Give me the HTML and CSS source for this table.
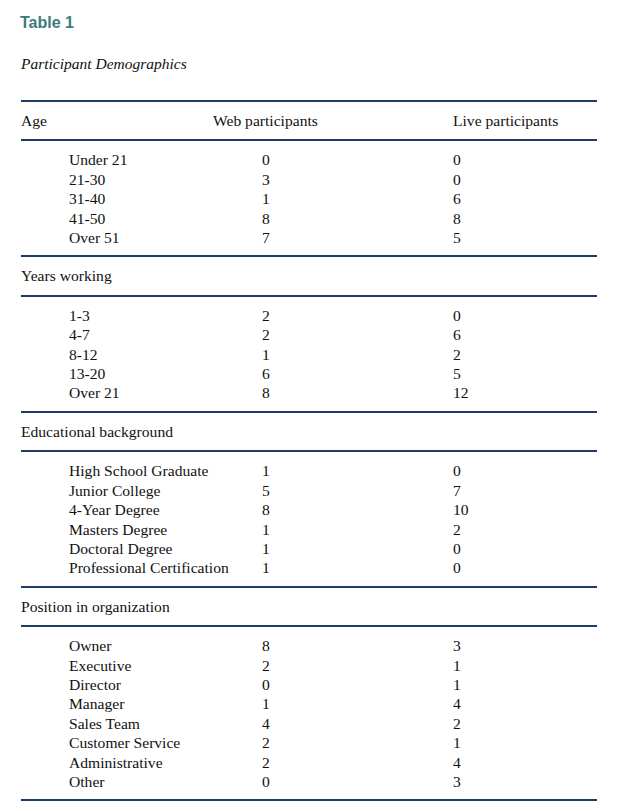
FILE: index.html
```html
<!DOCTYPE html>
<html>
<head>
<meta charset="utf-8">
<link rel="stylesheet" href="styles.css">
</head>
<body>
<div class="page">
  <h1 class="title">Table 1</h1>
  <p class="caption">Participant Demographics</p>
  <div class="table">
    <div class="head">
      <span class="h-label">Age</span>
      <span class="h-web">Web participants</span>
      <span class="h-live">Live participants</span>
    </div>
    <div class="rows">
      <div class="row"><span>Under 21</span><span>0</span><span>0</span></div>
      <div class="row"><span>21-30</span><span>3</span><span>0</span></div>
      <div class="row"><span>31-40</span><span>1</span><span>6</span></div>
      <div class="row"><span>41-50</span><span>8</span><span>8</span></div>
      <div class="row"><span>Over 51</span><span>7</span><span>5</span></div>
    </div>
    <div class="section">Years working</div>
    <div class="rows">
      <div class="row"><span>1-3</span><span>2</span><span>0</span></div>
      <div class="row"><span>4-7</span><span>2</span><span>6</span></div>
      <div class="row"><span>8-12</span><span>1</span><span>2</span></div>
      <div class="row"><span>13-20</span><span>6</span><span>5</span></div>
      <div class="row"><span>Over 21</span><span>8</span><span>12</span></div>
    </div>
    <div class="section">Educational background</div>
    <div class="rows">
      <div class="row"><span>High School Graduate</span><span>1</span><span>0</span></div>
      <div class="row"><span>Junior College</span><span>5</span><span>7</span></div>
      <div class="row"><span>4-Year Degree</span><span>8</span><span>10</span></div>
      <div class="row"><span>Masters Degree</span><span>1</span><span>2</span></div>
      <div class="row"><span>Doctoral Degree</span><span>1</span><span>0</span></div>
      <div class="row"><span>Professional Certification</span><span>1</span><span>0</span></div>
    </div>
    <div class="section">Position in organization</div>
    <div class="rows">
      <div class="row"><span>Owner</span><span>8</span><span>3</span></div>
      <div class="row"><span>Executive</span><span>2</span><span>1</span></div>
      <div class="row"><span>Director</span><span>0</span><span>1</span></div>
      <div class="row"><span>Manager</span><span>1</span><span>4</span></div>
      <div class="row"><span>Sales Team</span><span>4</span><span>2</span></div>
      <div class="row"><span>Customer Service</span><span>2</span><span>1</span></div>
      <div class="row"><span>Administrative</span><span>2</span><span>4</span></div>
      <div class="row"><span>Other</span><span>0</span><span>3</span></div>
    </div>
  </div>
</div>
</body>
</html>
```

FILE: styles.css
```css
html, body {
  margin: 0;
  padding: 0;
  background: #ffffff;
}

.page {
  padding: 13px 25px 0 20px;
  font-family: "Liberation Serif", "Times New Roman", serif;
  font-size: 15.6px;
  color: #111111;
}

.title {
  margin: 0;
  font-family: "Liberation Sans", Arial, sans-serif;
  font-size: 16px;
  font-weight: bold;
  line-height: 19px;
  color: #3d7a7d;
}

.caption {
  margin: 22px 0 0 1px;
  font-style: italic;
  font-size: 15.5px;
  line-height: 19px;
}

.table {
  margin-top: 27px;
  margin-left: 1px;
  border-top: 2px solid #1c3d66;
}

.head {
  display: grid;
  grid-template-columns: 192px 240px 1fr;
  padding: 9px 0 9px 0;
  line-height: 19.4px;
  border-bottom: 2px solid #1c3d66;
}

.section {
  padding: 9px 0;
  line-height: 19.4px;
  border-bottom: 2px solid #1c3d66;
}

.rows {
  padding: 9px 0 8px 48px;
  border-bottom: 2px solid #1c3d66;
}

.row {
  display: grid;
  grid-template-columns: 193px 191px 1fr;
  line-height: 19.4px;
}
```
